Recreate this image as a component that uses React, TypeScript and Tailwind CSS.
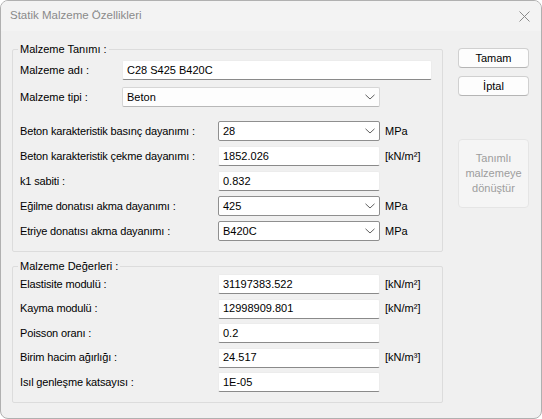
import React from 'react';

const Chevron = () => (
  <svg width="10" height="6" viewBox="0 0 10 6" className="shrink-0">
    <path d="M0.5 0.8 L5 5 L9.5 0.8" fill="none" stroke="#606060" strokeWidth="1" />
  </svg>
);

function TextBox({ value, w }: { value: string; w: string }) {
  return (
    <div className={`${w} h-[20px] shrink-0 flex items-center bg-white border border-[#ececec] border-b-[#8a8a8a] rounded-[2px] pl-[4px] text-black`}>
      {value}
    </div>
  );
}

function Combo({ value, w, list }: { value: string; w: string; list?: boolean }) {
  const border = list ? 'border-[#d6d6d6] border-b-[#b8b8b8] bg-[#fdfdfd]' : 'border-[#8f8f8f] bg-white';
  return (
    <div className={`${w} h-[20px] shrink-0 flex items-center justify-between border ${border} rounded-[2px] pl-[4px] pr-[4px]`}>
      <span>{value}</span>
      <Chevron />
    </div>
  );
}

type Row = { label: string; value: string; unit?: string; combo?: boolean };

const ROWS1: Row[] = [
  { label: 'Beton karakteristik basınç dayanımı :', value: '28', unit: 'MPa', combo: true },
  { label: 'Beton karakteristik çekme dayanımı :', value: '1852.026', unit: '[kN/m²]' },
  { label: 'k1 sabiti :', value: '0.832' },
  { label: 'Eğilme donatısı akma dayanımı :', value: '425', unit: 'MPa', combo: true },
  { label: 'Etriye donatısı akma dayanımı :', value: 'B420C', unit: 'MPa', combo: true },
];

const ROWS2: Row[] = [
  { label: 'Elastisite modulü :', value: '31197383.522', unit: '[kN/m²]' },
  { label: 'Kayma modulü :', value: '12998909.801', unit: '[kN/m²]' },
  { label: 'Poisson oranı :', value: '0.2' },
  { label: 'Birim hacim ağırlığı :', value: '24.517', unit: '[kN/m³]' },
  { label: 'Isıl genleşme katsayısı :', value: '1E-05' },
];

function FieldRow({ r }: { r: Row }) {
  return (
    <div className="flex h-[20px] items-center">
      <span className="w-[198px] shrink-0 whitespace-nowrap tracking-[-0.15px]">{r.label}</span>
      {r.combo ? <Combo value={r.value} w="w-[162px]" /> : <TextBox value={r.value} w="w-[162px]" />}
      {r.unit && <span className="ml-[5px]">{r.unit}</span>}
    </div>
  );
}

export default function App() {
  return (
    <div className="w-[542px] h-[419px] bg-white font-['Liberation_Sans',Arial,sans-serif] text-[11px] text-black">
      <div className="w-[542px] h-[419px] border border-[#b0b0b0] rounded-[8px] bg-[#f0f0f0] overflow-hidden flex flex-col">
        {/* title bar */}
        <div className="h-[30px] shrink-0 bg-[#f3f3f3] flex items-center justify-between pl-[9px] pr-[11px]">
          <span className="text-[#8a8a8a] text-[11.5px]">Statik Malzeme Özellikleri</span>
          <svg width="11" height="11" viewBox="0 0 11 11">
            <path d="M0.5 0.5 L10.5 10.5 M10.5 0.5 L0.5 10.5" stroke="#8a8a8a" strokeWidth="1" />
          </svg>
        </div>

        <div className="flex">
          <div className="ml-[11px] w-[431px] pt-[10px]">
            <fieldset className="border border-[#dcdcdc] rounded-[2px] pl-[7px] pb-[10px]">
              <legend className="-ml-[2px] px-[2px] leading-[16px]">Malzeme Tanımı :</legend>
              <div className="flex h-[20px] items-center mt-[3px]">
                <span className="w-[102px] shrink-0">Malzeme adı :</span>
                <TextBox value="C28 S425 B420C" w="w-[310px]" />
              </div>
              <div className="flex h-[20px] items-center mt-[7px]">
                <span className="w-[102px] shrink-0">Malzeme tipi :</span>
                <Combo value="Beton" w="w-[258px]" list />
              </div>
              <div className="flex flex-col gap-[5px] mt-[14px]">
                {ROWS1.map((r) => <FieldRow key={r.label} r={r} />)}
              </div>
            </fieldset>

            <fieldset className="mt-[6px] border border-[#dcdcdc] rounded-[2px] pl-[7px] pb-[10px]">
              <legend className="-ml-[2px] px-[2px] leading-[16px]">Malzeme Değerleri :</legend>
              <div className="flex flex-col gap-[4.5px]">
                {ROWS2.map((r) => <FieldRow key={r.label} r={r} />)}
              </div>
            </fieldset>
          </div>

          <div className="ml-[15px] mt-[17px] w-[71px] flex flex-col">
            <button className="h-[20px] bg-[#fdfdfd] border border-[#d0d0d0] border-b-[#b5b5b5] rounded-[4px] text-[11px] leading-none">Tamam</button>
            <button className="mt-[8px] h-[20px] bg-[#fdfdfd] border border-[#d0d0d0] border-b-[#b5b5b5] rounded-[4px] text-[11px] leading-none">İptal</button>
            <button disabled className="mt-[43px] h-[69px] bg-[#f5f5f5] border border-[#e5e5e5] rounded-[4px] text-[11px] leading-[15px] text-[#9d9d9d]">
              Tanımlı<br />malzemeye<br />dönüştür
            </button>
          </div>
        </div>
      </div>
    </div>
  );
}
